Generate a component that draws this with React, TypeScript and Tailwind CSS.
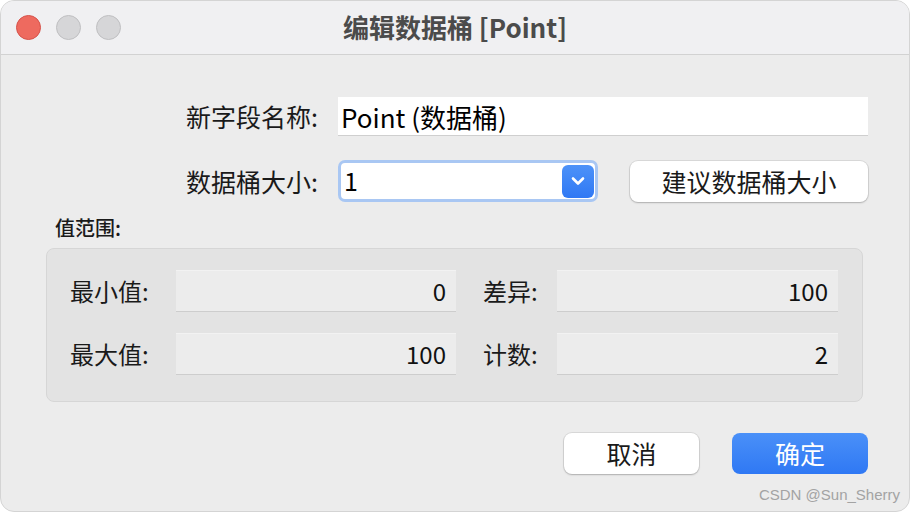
import React from "react";

const font = { fontFamily: '"Noto Sans CJK SC", "Noto Sans", sans-serif' };

function Field({ value }: { value: string }) {
    return (
        <div className="h-[42px] bg-[#ececec] border-t border-t-[#f2f2f2] border-b border-b-[#cdcdcd] flex items-center justify-end pr-[10px] text-[24px] text-[#111]">
            {value}
        </div>
    );
}

export default function App() {
    return (
        <div className="w-[910px] h-[512px] bg-white" style={font}>
            <div className="relative h-full rounded-[14px] overflow-hidden bg-[#ececec] border border-[#d4d4d4] flex flex-col">
                {/* Title bar */}
                <div className="h-[54px] shrink-0 bg-[#f0f0f2] border-b border-[#d2d2d2] grid grid-cols-[1fr_auto_1fr] items-center">
                    <div className="flex items-center gap-[15px] pl-[15px]">
                        <span className="w-[25px] h-[25px] rounded-full bg-[#ee6a5f] border border-[#d6524a]" />
                        <span className="w-[25px] h-[25px] rounded-full bg-[#d6d6d8] border border-[#bfbfc1]" />
                        <span className="w-[25px] h-[25px] rounded-full bg-[#d6d6d8] border border-[#bfbfc1]" />
                    </div>
                    <div className="text-[26px] font-bold text-[#4b4b4b] leading-none pb-[2px]">编辑数据桶 [Point]</div>
                    <div />
                </div>

                {/* Body */}
                <div className="flex-1 flex flex-col pt-[42px]">
                    <div className="flex items-center">
                        <div className="w-[317px] text-right text-[25px] text-[#1a1a1a] leading-none">新字段名称:</div>
                        <div className="ml-[20px] w-[530px] h-[39px] bg-white border-b border-[#cfcfcf] flex items-center pl-[3px] text-[26px] text-black">
                            Point (数据桶)
                        </div>
                    </div>

                    <div className="flex items-center mt-[24px]">
                        <div className="w-[317px] text-right text-[25px] text-[#1a1a1a] leading-none">数据桶大小:</div>
                        <div className="ml-[20px] w-[260px] h-[42px] rounded-[7px] bg-white border-[3px] border-[#a9c7f3] flex items-center justify-between pl-[3px] pr-[1px]">
                            <span className="text-[25px] text-black">1</span>
                            <span className="w-[32px] h-[33px] rounded-[6px] bg-gradient-to-b from-[#4d92f8] to-[#2f78f4] flex items-center justify-center">
                                <svg width="14" height="10" viewBox="0 0 14 10" fill="none">
                                    <path d="M2 2.5 L7 7.5 L12 2.5" stroke="white" strokeWidth="2.6" strokeLinecap="round" strokeLinejoin="round" />
                                </svg>
                            </span>
                        </div>
                        <button className="ml-[32px] w-[238px] h-[41px] rounded-[8px] bg-white shadow-[0_0_0_1px_rgba(0,0,0,0.08),0_1px_2px_rgba(0,0,0,0.2)] text-[25px] text-[#1a1a1a] leading-none">
                            建议数据桶大小
                        </button>
                    </div>

                    <div className="ml-[54px] mt-[11px] text-[20px] font-medium text-[#1a1a1a]">值范围:</div>

                    <div className="ml-[45px] mr-[46px] mt-[5px] h-[154px] rounded-[8px] bg-[#e3e3e3] border border-[#d6d6d6] pl-[23px] pt-[21px]">
                        <div className="grid grid-cols-[106px_280px_101px_281px] gap-y-[21px] items-center">
                            <div className="text-[24px] text-[#1a1a1a]">最小值:</div>
                            <Field value="0" />
                            <div className="pl-[27px] text-[24px] text-[#1a1a1a]">差异:</div>
                            <Field value="100" />
                            <div className="text-[24px] text-[#1a1a1a]">最大值:</div>
                            <Field value="100" />
                            <div className="pl-[27px] text-[24px] text-[#1a1a1a]">计数:</div>
                            <Field value="2" />
                        </div>
                    </div>

                    <div className="flex justify-end gap-[33px] mr-[41px] mt-[31px]">
                        <button className="w-[135px] h-[41px] rounded-[8px] bg-white shadow-[0_0_0_1px_rgba(0,0,0,0.08),0_1px_2px_rgba(0,0,0,0.2)] text-[25px] text-[#1a1a1a] leading-none">
                            取消
                        </button>
                        <button className="w-[136px] h-[41px] rounded-[8px] bg-gradient-to-b from-[#4a90f8] to-[#2f78f4] text-[25px] text-white leading-none">
                            确定
                        </button>
                    </div>
                </div>

                <div className="absolute right-[9px] bottom-[5px] text-[15px] text-[#a3a3a3]" style={{ fontFamily: '"Liberation Sans", Arial, sans-serif' }}>
                    CSDN @Sun_Sherry
                </div>
            </div>
        </div>
    );
}
